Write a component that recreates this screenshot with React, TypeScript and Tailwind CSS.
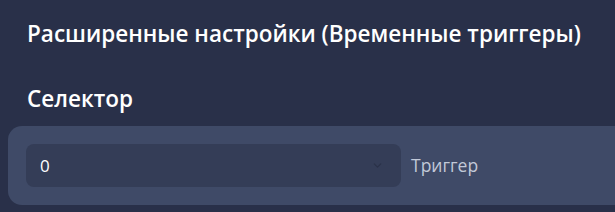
import React from 'react';
import { ChevronDown } from 'lucide-react';

const App: React.FC = () => {
  return (
    <div className="min-h-screen w-full bg-[#293049] pt-[19px] overflow-hidden" style={{ fontFamily: '"Open Sans", "Noto Sans", sans-serif' }}>
      <h1 className="pl-[27px] text-[22.5px] leading-[30px] font-semibold text-white whitespace-nowrap">
        Расширенные настройки (Временные триггеры)
      </h1>
      <h2 className="pl-[27px] mt-[35px] text-[22.5px] leading-[30px] font-semibold text-white">Селектор</h2>
      <div className="ml-[8px] mt-[12px] -mr-[20px] rounded-[14px] bg-[#3f4a67] pl-[18px] py-[18px] flex items-center">
        <div className="w-[375px] h-[43px] rounded-[8px] bg-[#343d57] flex items-center justify-between pl-[14px] pr-[17px]">
          <span className="text-[17px] text-white">0</span>
          <ChevronDown className="w-[13px] h-[13px] text-[#2a3148]" strokeWidth={2} />
        </div>
        <span className="ml-[10px] text-[17.5px] text-[#c2c9d8]">Триггер</span>
      </div>
    </div>
  );
};

export default App;
